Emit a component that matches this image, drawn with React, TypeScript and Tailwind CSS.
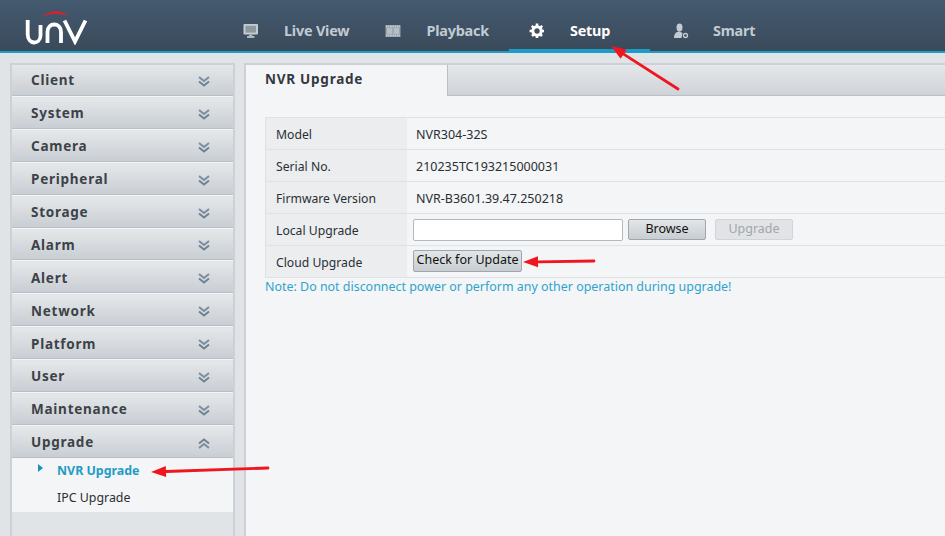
import type { ReactNode } from 'react';

const menus = ['Client', 'System', 'Camera', 'Peripheral', 'Storage', 'Alarm', 'Alert', 'Network', 'Platform', 'User', 'Maintenance'];

const rows = [
  { label: 'Model', value: 'NVR304-32S' },
  { label: 'Serial No.', value: '210235TC193215000031' },
  { label: 'Firmware Version', value: 'NVR-B3601.39.47.250218' },
];

function Logo() {
  return (
    <svg width="64" height="34" viewBox="0 0 64 34" fill="none" className="ml-[25px] mt-[11px]">
      <path d="M17 6 C 25 -1.5 36 -1.5 43 5.5 C 35 1.8 26 1.8 17 6 Z" fill="#e01f2d" />
      <path d="M2.7 9 V23 C2.7 34.5 15 33.5 15.5 25 V14" stroke="#fff" strokeWidth="3.8" />
      <path d="M22.5 32 V21 C22.5 11 36 11 36 21 V32" stroke="#fff" strokeWidth="3.8" />
      <path d="M39.5 9.5 L50 30.5 L60.5 9.5" stroke="#fff" strokeWidth="3.8" />
    </svg>
  );
}

function MonitorIcon() {
  return (
    <svg width="16" height="16" viewBox="0 0 16 16">
      <rect x="0.5" y="1" width="14.5" height="10.5" rx="1" fill="#c3ccd2" />
      <rect x="2.5" y="2.8" width="10.5" height="6.8" fill="#8d999f" />
      <rect x="6" y="11.5" width="3.5" height="2" fill="#aab4ba" />
      <rect x="4" y="13.2" width="7.5" height="1.6" fill="#c3ccd2" />
    </svg>
  );
}

function FilmIcon() {
  return (
    <svg width="16" height="14" viewBox="0 0 16 14">
      <rect x="0.5" y="1" width="15" height="12" fill="#98a4ab" />
      <path d="M1 2.5 H15 M1 11.5 H15" stroke="#d0d6da" strokeWidth="1.4" strokeDasharray="1.2 1" />
      <rect x="2" y="4" width="5.3" height="6" fill="#b4bec5" />
      <rect x="8.7" y="4" width="5.3" height="6" fill="#b4bec5" />
    </svg>
  );
}

function GearIcon() {
  return (
    <svg width="16" height="16" viewBox="0 0 16 16">
      <circle cx="8" cy="8" r="4.2" fill="none" stroke="#fff" strokeWidth="3" />
      <path
        d="M8 0.6 V15.4 M0.6 8 H15.4 M2.8 2.8 L13.2 13.2 M13.2 2.8 L2.8 13.2"
        stroke="#fff"
        strokeWidth="2.6"
        strokeDasharray="3 8.4"
      />
    </svg>
  );
}

function SmartIcon() {
  return (
    <svg width="16" height="16" viewBox="0 0 16 16">
      <ellipse cx="6.5" cy="4.5" rx="3" ry="4" fill="#c3ccd2" />
      <path d="M1 15 C1 10.5 3.5 8.5 6.5 8.5 L9.5 10 L8.5 15 Z" fill="#c3ccd2" />
      <circle cx="12.5" cy="12.5" r="2" fill="none" stroke="#c3ccd2" strokeWidth="1.3" />
    </svg>
  );
}

function Chevrons({ up }: { up?: boolean }) {
  return (
    <svg width="12" height="11" viewBox="0 0 12 11" fill="none" className={up ? 'rotate-180' : ''}>
      <path d="M1 1 L6 5 L11 1" stroke="#7c8d9e" strokeWidth="2" />
      <path d="M1 5.5 L6 9.5 L11 5.5" stroke="#6f8193" strokeWidth="2" />
    </svg>
  );
}

function NavItem({ icon, label, gap, active }: { icon: ReactNode; label: string; gap: string; active?: boolean }) {
  return (
    <div
      className={`flex h-[51px] items-center ${gap} ${
        active ? 'w-[141px] border-b-[2px] border-[#1f9cc4] pl-[20px] pt-[13px] text-white' : 'pt-[11px] text-[#c1cbd3]'
      }`}
    >
      {icon}
      <span className="text-[14.4px] font-bold tracking-[-0.2px]">{label}</span>
    </div>
  );
}

function MenuHeader({ label, open }: { label: string; open?: boolean }) {
  return (
    <div className="mb-[1.9px] flex h-[31px] shrink-0 items-center justify-between border-b border-[#b9bfc5] bg-gradient-to-b from-[#e5e8ea] to-[#c9ced4] pl-[19px] pr-[23px] shadow-[0_1px_0_#f4f5f6]">
      <span className="pt-[1px] text-[13.5px] font-bold tracking-[0.75px] text-[#3c4248]">{label}</span>
      <span className="pt-[3px]">
        <Chevrons up={open} />
      </span>
    </div>
  );
}

function RedArrow({ x1, y1, x2, y2 }: { x1: number; y1: number; x2: number; y2: number }) {
  // arrow head sits at x2,y2
  const a = Math.atan2(y2 - y1, x2 - x1);
  const l = 15;
  const w = 5.5;
  const bx = x2 - l * Math.cos(a);
  const by = y2 - l * Math.sin(a);
  const px = -Math.sin(a) * w;
  const py = Math.cos(a) * w;
  return (
    <>
      <line x1={x1} y1={y1} x2={bx} y2={by} stroke="#f01620" strokeWidth="2.8" strokeLinecap="round" />
      <polygon points={`${x2},${y2} ${bx + px},${by + py} ${bx - px},${by - py}`} fill="#f01620" />
    </>
  );
}

export default function App() {
  return (
    <div className="relative flex h-[536px] w-[945px] flex-col overflow-hidden bg-[#e1e4e7] font-['Noto_Sans','Open_Sans',sans-serif]">
      <header className="flex h-[53px] shrink-0 border-b-2 border-[#1a9dc6] bg-gradient-to-b from-[#445a70] to-[#3a4a5a]">
        <div className="w-[243px] shrink-0">
          <Logo />
        </div>
        <NavItem icon={<MonitorIcon />} label="Live View" gap="gap-[25px]" />
        <div className="w-[36px]" />
        <NavItem icon={<FilmIcon />} label="Playback" gap="gap-[25px]" />
        <div className="w-[20px]" />
        <NavItem icon={<GearIcon />} label="Setup" gap="gap-[25px]" active />
        <div className="w-[23px]" />
        <NavItem icon={<SmartIcon />} label="Smart" gap="gap-[24px]" />
      </header>

      <div className="flex min-h-0 flex-1 pl-[10px] pt-[10px]">
        <aside className="flex w-[225px] shrink-0 flex-col border-x-2 border-t-2 border-[#cdd1d5] bg-[#e1e4e7]">
          {menus.map((m) => (
            <MenuHeader key={m} label={m} />
          ))}
          <MenuHeader label="Upgrade" open />
          <div className="-mt-[2px] flex h-[54px] flex-col bg-[#f4f5f7] text-[12.4px]">
            <div className="relative flex h-[28px] items-center pl-[45px] font-bold text-[#1f9cc4]">
              <span className="absolute left-[26px] top-[6px] h-0 w-0 border-y-[4px] border-l-[5px] border-y-transparent border-l-[#1f8fb8]" />
              NVR Upgrade
            </div>
            <div className="flex h-[26px] items-center pl-[45px] text-[#2a2f33]">IPC Upgrade</div>
          </div>
        </aside>

        <main className="ml-[9px] flex min-w-0 flex-1 flex-col border-l-2 border-t-2 border-[#cdd1d5] bg-[#f4f5f7]">
          <div className="flex h-[31px] shrink-0">
            <div className="flex w-[201px] items-center pb-[3px] pl-[19px] text-[13.5px] font-bold tracking-[0.75px] text-[#33393f]">
              NVR Upgrade
            </div>
            <div className="flex-1 border-b border-l border-[#b9bfc5] bg-gradient-to-b from-[#e5e8ea] to-[#cfd3d8]" />
          </div>

          <div className="ml-[19px] mt-[21px] border-y border-l border-[#dfe2e5] text-[12.5px] text-[#2a2f33]">
            {rows.map((r) => (
              <div key={r.label} className="flex h-[32px] border-b border-[#dfe2e5]">
                <div className="flex w-[141px] items-center bg-[#ebedef] pl-[10px] pt-[3px] text-[12.2px]">{r.label}</div>
                <div className="flex items-center pl-[9px] pt-[3px]">{r.value}</div>
              </div>
            ))}
            <div className="flex h-[32px] border-b border-[#dfe2e5]">
              <div className="flex w-[141px] items-center bg-[#ebedef] pl-[10px] pt-[3px] text-[12.2px]">Local Upgrade</div>
              <div className="flex items-center pl-[6px]">
                <div className="h-[22px] w-[210px] rounded-[2px] border border-[#b4b9be] bg-white" />
                <button className="ml-[5px] h-[21px] w-[78px] rounded-[2px] border border-[#9fa6ac] bg-gradient-to-b from-[#e3e6e8] to-[#c8cdd2] text-[12.5px] text-[#111]">
                  Browse
                </button>
                <button className="ml-[9px] h-[21px] w-[78px] rounded-[2px] border border-[#d2d5d8] bg-[#e1e3e6] text-[12.5px] text-[#a2a6aa]">
                  Upgrade
                </button>
              </div>
            </div>
            <div className="flex h-[31px]">
              <div className="flex w-[141px] items-center bg-[#ebedef] pl-[10px] pt-[3px] text-[12.2px]">Cloud Upgrade</div>
              <div className="flex items-center pb-[2px] pl-[6px]">
                <button className="h-[22px] w-[109px] rounded-[2px] border border-[#9fa6ac] bg-gradient-to-b from-[#e3e6e8] to-[#c8cdd2] text-[12.5px] text-[#111]">
                  Check for Update
                </button>
              </div>
            </div>
          </div>

          <p className="ml-[19px] text-[12.45px] leading-[17px] text-[#2fa4cc]">
            Note: Do not disconnect power or perform any other operation during upgrade!
          </p>
        </main>
      </div>

      {/* annotations drawn on top of the screenshot */}
      <svg className="pointer-events-none absolute left-0 top-0" width="945" height="536">
        <RedArrow x1={678} y1={89} x2={611} y2={46} />
        <RedArrow x1={594} y1={261} x2={523} y2={262} />
        <RedArrow x1={268} y1={468} x2={151} y2={472} />
      </svg>
    </div>
  );
}
